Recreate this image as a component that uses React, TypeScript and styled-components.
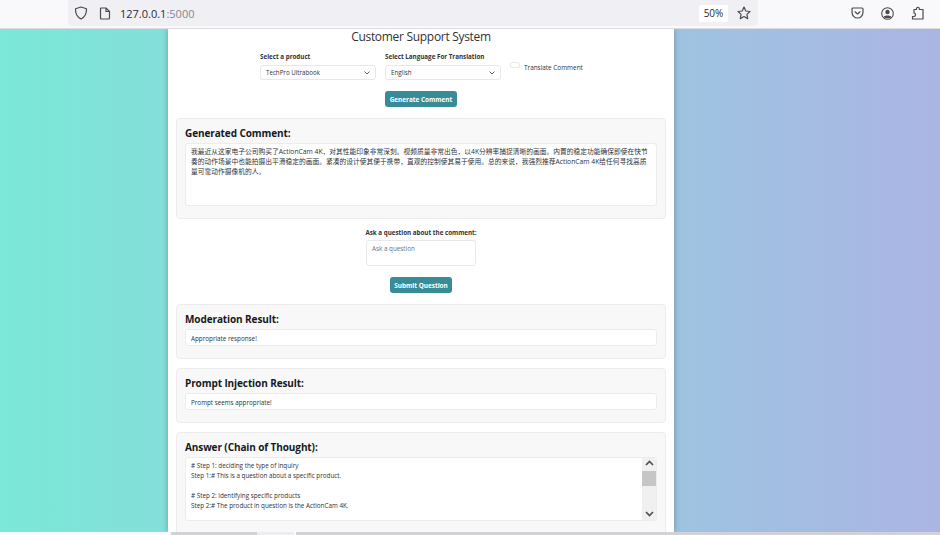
import React from 'react'
import styled, { createGlobalStyle } from 'styled-components'

const GlobalStyle = createGlobalStyle`
  html, body {
    margin: 0;
    height: 100%;
    overflow: hidden;
  }

  body {
    font-family: "Open Sans", "Noto Sans", "Noto Sans CJK SC", sans-serif;
    color: #212529;
  }
`

const Window = styled.div`
  width: 940px;
  height: 535px;
  display: flex;
  flex-direction: column;
  overflow: hidden;
  background: #f9f9fb;
`

const Toolbar = styled.header`
  flex: 0 0 29px;
  box-sizing: border-box;
  display: flex;
  padding-left: 68px;
  background: #f9f9fb;
  border-bottom: 1px solid #dcdce0;
`

const UrlBar = styled.div`
  width: 690px;
  height: 26px;
  box-sizing: border-box;
  display: flex;
  align-items: center;
  padding: 0 7px 0 6px;
  background: #f0f0f4;
  border-radius: 0 0 4px 4px;
`

const PageIcon = styled.span`
  display: flex;
  margin-left: 11px;
`

const Url = styled.span`
  margin-left: 9px;
  font-size: 11px;
  color: #2b2a33;
`

const Port = styled.span`
  color: #85858c;
`

const Zoom = styled.span`
  margin-left: auto;
  margin-right: 9px;
  width: 29px;
  height: 17px;
  display: flex;
  align-items: center;
  justify-content: center;
  font-size: 10px;
  color: #2b2a33;
  background: #fff;
  border-radius: 2px;
`

const ToolIcons = styled.div`
  display: flex;
  align-items: center;
  gap: 17px;
  height: 26px;
  margin-left: 93px;
`

const Viewport = styled.main`
  flex: 1;
  min-height: 0;
  display: flex;
  padding-left: 168px;
  overflow: hidden;
  background: linear-gradient(to right, #7be8d8, #abb5e4);
`

const Container = styled.div`
  width: 506px;
  height: 100%;
  box-sizing: border-box;
  padding: 0 8px;
  background: #fff;
  box-shadow: 0 0 6px rgba(0, 0, 0, 0.28);
  overflow: hidden;
`

const Title = styled.h1`
  margin: 0 0 8px;
  padding-top: 1px;
  font-size: 12px;
  line-height: 14px;
  font-weight: 400;
  letter-spacing: -0.3px;
  text-align: center;
  color: #333;
`

const FormRow = styled.div`
  display: flex;
  justify-content: center;
  gap: 9px;
  height: 32px;
`

const Field = styled.div`
  width: 116px;
`

const Label = styled.label`
  display: block;
  margin-bottom: 3px;
  font-size: 6.25px;
  line-height: 10px;
  font-weight: 700;
  color: #2f3338;
`

const Select = styled.div`
  height: 15px;
  box-sizing: border-box;
  display: flex;
  align-items: center;
  justify-content: space-between;
  padding: 0 5px;
  font-size: 6.2px;
  color: #2f3338;
  border: 1px solid #e6e8eb;
  border-radius: 3px;
`

const CheckField = styled.div`
  width: 72px;
  display: flex;
  gap: 4px;
  padding-top: 10px;
`

const Checkbox = styled.span`
  flex: 0 0 auto;
  width: 8px;
  height: 4px;
  border: 1px solid #e6e8eb;
  border-radius: 2px;
`

const CheckLabel = styled.span`
  margin-top: 1px;
  font-size: 6.4px;
  line-height: 10px;
  white-space: nowrap;
  color: #2f3338;
`

const ButtonRow = styled.div<{ $top: number; $bottom: number }>`
  display: flex;
  justify-content: center;
  margin: ${(p) => p.$top}px 0 ${(p) => p.$bottom}px;
`

const Button = styled.button<{ $width: number }>`
  width: ${(p) => p.$width}px;
  height: 16px;
  padding: 0;
  font-family: inherit;
  font-size: 6.4px;
  font-weight: 700;
  color: #fff;
  background: #378c97;
  border: none;
  border-radius: 3px;
`

const Card = styled.section<{ $height?: number }>`
  box-sizing: border-box;
  height: ${(p) => (p.$height ? `${p.$height}px` : 'auto')};
  margin-bottom: 9px;
  padding: 8px 8px 14px;
  background: #f8f8f8;
  border: 1px solid #ececec;
  border-radius: 4px;
`

const CardTitle = styled.h2`
  margin: 0 0 3px;
  font-size: 10px;
  line-height: 13px;
  font-weight: 700;
  letter-spacing: -0.1px;
  color: #15191d;
`

const TextBox = styled.div<{ $height: number }>`
  height: ${(p) => p.$height}px;
  box-sizing: border-box;
  display: flex;
  background: #fff;
  border: 1px solid #ececec;
  border-radius: 3px;
  overflow: hidden;
`

const BoxText = styled.div`
  flex: 1;
  min-width: 0;
  padding: 3px 5px;
  font-size: 6.3px;
  line-height: 10px;
  white-space: pre-wrap;
  color: #2f3338;
`

const CommentText = styled(BoxText)`
  padding-right: 8px;
  font-size: 6.75px;
`

const SingleLine = styled(BoxText)`
  padding-top: 4px;
`

const Scrollbar = styled.div`
  flex: 0 0 14px;
  display: flex;
  flex-direction: column;
  align-items: center;
  justify-content: space-between;
  padding: 2px 0 3px;
  background: #f0f0f0;
  position: relative;
`

const Thumb = styled.div`
  position: absolute;
  top: 13px;
  left: 0;
  width: 100%;
  height: 15px;
  background: #c6c6c6;
`

const AskSection = styled.div`
  display: flex;
  flex-direction: column;
  align-items: center;
`

const AskLabel = styled(Label)`
  margin-bottom: 2px;
`

const AskBox = styled.div`
  width: 110px;
  height: 26px;
  box-sizing: border-box;
  padding: 3px 5px;
  font-size: 6.3px;
  line-height: 10px;
  color: #6c757d;
  border: 1px solid #e6e8eb;
  border-radius: 3px;
`

const BottomStrip = styled.div`
  flex: 0 0 3px;
  display: flex;
  background: #f9f9fb;
`

const StripTrack = styled.div<{ $width: number; $left: number; $color: string }>`
  width: ${(p) => p.$width}px;
  margin-left: ${(p) => p.$left}px;
  background: ${(p) => p.$color};
`

const ShieldIcon = () => (
  <svg width="14" height="14" viewBox="0 0 14 14" fill="none" stroke="#4a4a50" strokeWidth="1.2" strokeLinejoin="round">
    <path d="M7 1 L12.5 2.8 C12.7 7.5 11 11 7 13 C3 11 1.3 7.5 1.5 2.8 Z" />
  </svg>
)

const FileIcon = () => (
  <svg width="12" height="13" viewBox="0 0 12 13" fill="none" stroke="#4a4a50" strokeWidth="1.2" strokeLinejoin="round">
    <path d="M2 1 H7 L10.5 4.5 V11 Q10.5 12 9.5 12 H2.5 Q1.5 12 1.5 11 V1.5 Z" />
    <path d="M7 1 V4.5 H10.5" />
  </svg>
)

const StarIcon = () => (
  <svg width="14" height="14" viewBox="0 0 14 14" fill="none" stroke="#4a4a50" strokeWidth="1.2" strokeLinejoin="round">
    <path d="M7 1 L8.8 5 L13 5.5 L9.9 8.4 L10.7 12.7 L7 10.6 L3.3 12.7 L4.1 8.4 L1 5.5 L5.2 5 Z" />
  </svg>
)

const PocketIcon = () => (
  <svg width="13" height="12" viewBox="0 0 13 12" fill="none" stroke="#4a4a50" strokeWidth="1.2" strokeLinecap="round" strokeLinejoin="round">
    <path d="M2 1 H11 Q12 1 12 2 V5 C12 8.5 9.5 11 6.5 11 C3.5 11 1 8.5 1 5 V2 Q1 1 2 1 Z" />
    <path d="M4 4.8 L6.5 7 L9 4.8" />
  </svg>
)

const ProfileIcon = () => (
  <svg width="13" height="13" viewBox="0 0 13 13">
    <circle cx="6.5" cy="6.5" r="5.8" fill="none" stroke="#4a4a50" strokeWidth="1.1" />
    <circle cx="6.5" cy="5" r="2.2" fill="#4a4a50" />
    <path d="M2.6 10 C3.5 8 9.5 8 10.4 10 C9 11.6 4 11.6 2.6 10 Z" fill="#4a4a50" />
  </svg>
)

const PuzzleIcon = () => (
  <svg width="13" height="14" viewBox="0 0 13 14" fill="none" stroke="#4a4a50" strokeWidth="1.2" strokeLinejoin="round">
    <path d="M3 3.5 H5.5 C4.8 0.5 9 0.5 8.3 3.5 H12 V13 H1.5 V10.5 H3 C5 10.5 5 7 3 7 Z" />
  </svg>
)

const Chevron = ({ up }: { up?: boolean }) => (
  <svg width="9" height="6" viewBox="0 0 9 6" fill="none" stroke="#505050" strokeWidth="1.7">
    <path d={up ? 'M1 5 L4.5 1.5 L8 5' : 'M1 1 L4.5 4.5 L8 1'} />
  </svg>
)

const SelectCaret = () => (
  <svg width="6" height="4" viewBox="0 0 6 4" fill="none" stroke="#4a4f55" strokeWidth="0.9">
    <path d="M0.5 0.5 L3 3 L5.5 0.5" />
  </svg>
)

const comment =
  '我最近从这家电子公司购买了ActionCam 4K，对其性能印象非常深刻。视频质量非常出色，以4K分辨率捕捉清晰的画面。内置的稳定功能确保即使在快节奏的动作场景中也能拍摄出平滑稳定的画面。紧凑的设计使其便于携带，直观的控制使其易于使用。总的来说，我强烈推荐ActionCam 4K给任何寻找高质量可靠动作摄像机的人。'

const answer = `# Step 1: deciding the type of inquiry
Step 1:# This is a question about a specific product.

# Step 2: identifying specific products
Step 2:# The product in question is the ActionCam 4K.`

const App: React.FC = () => {
  return (
    <Window>
      <GlobalStyle />
      <Toolbar>
        <UrlBar>
          <ShieldIcon />
          <PageIcon>
            <FileIcon />
          </PageIcon>
          <Url>
            127.0.0.1<Port>:5000</Port>
          </Url>
          <Zoom>50%</Zoom>
          <StarIcon />
        </UrlBar>
        <ToolIcons>
          <PocketIcon />
          <ProfileIcon />
          <PuzzleIcon />
        </ToolIcons>
      </Toolbar>
      <Viewport>
        <Container>
          <Title>Customer Support System</Title>
          <FormRow>
            <Field>
              <Label>Select a product</Label>
              <Select>
                TechPro Ultrabook
                <SelectCaret />
              </Select>
            </Field>
            <Field>
              <Label>Select Language For Translation</Label>
              <Select>
                English
                <SelectCaret />
              </Select>
            </Field>
            <CheckField>
              <Checkbox />
              <CheckLabel>Translate Comment</CheckLabel>
            </CheckField>
          </FormRow>
          <ButtonRow $top={7} $bottom={11}>
            <Button $width={72}>Generate Comment</Button>
          </ButtonRow>
          <Card $height={101}>
            <CardTitle>Generated Comment:</CardTitle>
            <TextBox $height={63}>
              <CommentText>{comment}</CommentText>
            </TextBox>
          </Card>
          <AskSection>
            <AskLabel>Ask a question about the comment:</AskLabel>
            <AskBox>Ask a question</AskBox>
          </AskSection>
          <ButtonRow $top={11} $bottom={11}>
            <Button $width={62}>Submit Question</Button>
          </ButtonRow>
          <Card $height={55}>
            <CardTitle>Moderation Result:</CardTitle>
            <TextBox $height={17}>
              <SingleLine>Appropriate response!</SingleLine>
            </TextBox>
          </Card>
          <Card $height={55}>
            <CardTitle>Prompt Injection Result:</CardTitle>
            <TextBox $height={17}>
              <SingleLine>Prompt seems appropriate!</SingleLine>
            </TextBox>
          </Card>
          <Card>
            <CardTitle>Answer (Chain of Thought):</CardTitle>
            <TextBox $height={64}>
              <BoxText>{answer}</BoxText>
              <Scrollbar>
                <Chevron up />
                <Thumb />
                <Chevron />
              </Scrollbar>
            </TextBox>
          </Card>
        </Container>
      </Viewport>
      <BottomStrip>
        <StripTrack $width={171} $left={0} $color="#f9f9fb" />
        <StripTrack $width={86} $left={0} $color="#d2d2d6" />
        <StripTrack $width={37} $left={0} $color="#eeeef0" />
        <StripTrack $width={644} $left={2} $color="#d2d2d6" />
      </BottomStrip>
    </Window>
  )
}

export default App
